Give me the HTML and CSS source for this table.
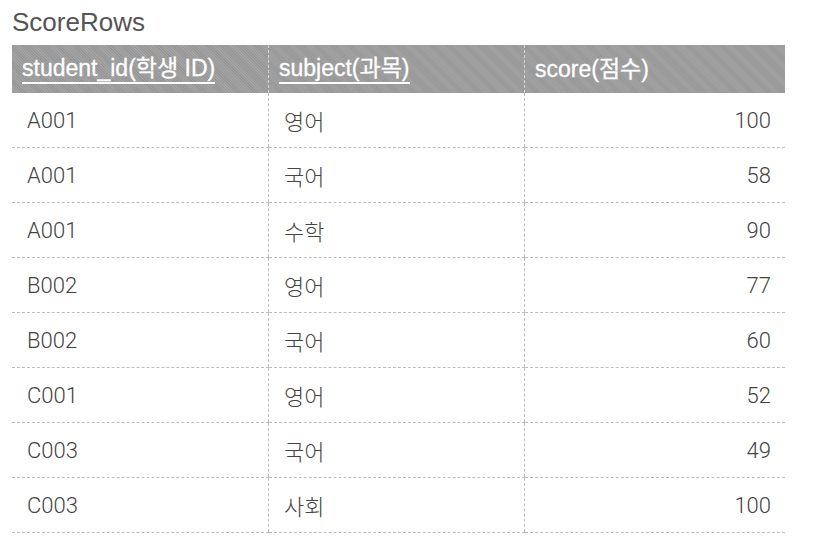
FILE: index.html
```html
<!DOCTYPE html>
<html lang="ko">
<head>
<meta charset="utf-8">
<link rel="stylesheet" href="styles.css">
</head>
<body>
<div class="page">
  <div class="title">ScoreRows</div>
  <table class="grid">
    <thead>
      <tr>
        <th class="c1"><span>student_id(학생 ID)</span></th>
        <th class="c2"><span>subject(과목)</span></th>
        <th class="c3"><span class="plain">score(점수)</span></th>
      </tr>
    </thead>
    <tbody>
      <tr><td>A001</td><td>영어</td><td class="num">100</td></tr>
      <tr><td>A001</td><td>국어</td><td class="num">58</td></tr>
      <tr><td>A001</td><td>수학</td><td class="num">90</td></tr>
      <tr><td>B002</td><td>영어</td><td class="num">77</td></tr>
      <tr><td>B002</td><td>국어</td><td class="num">60</td></tr>
      <tr><td>C001</td><td>영어</td><td class="num">52</td></tr>
      <tr><td>C003</td><td>국어</td><td class="num">49</td></tr>
      <tr><td>C003</td><td>사회</td><td class="num">100</td></tr>
    </tbody>
  </table>
</div>
</body>
</html>
```
FILE: styles.css
```css
html, body {
  margin: 0;
  padding: 0;
  background: #ffffff;
}
body {
  font-family: "Liberation Sans", "Noto Sans CJK KR", sans-serif;
  color: #4d4d4d;
}
.page {
  padding: 7px 0 0 12px;
  width: 773px;
}
.title {
  font-size: 26px;
  line-height: 30px;
  color: #555555;
  height: 38px;
}
.grid {
  width: 773px;
  border-collapse: collapse;
  table-layout: fixed;
}
.grid th {
  background: #9d9d9d;
  background-image: repeating-linear-gradient(45deg, rgba(255,255,255,0.06) 0 1px, rgba(0,0,0,0.04) 1px 2px);
  color: #ffffff;
  font-weight: normal;
  font-size: 23px;
  text-align: left;
  height: 48px;
  padding: 0 0 0 10px;
  vertical-align: middle;
  border-left: 1px dashed #d4d4d4;
  -webkit-text-stroke: 0.3px #ffffff;
}
.grid th:first-child { border-left: none; }
.grid th span {
  display: inline-block;
  border-bottom: 2px solid #ffffff;
  line-height: 27px;
  padding-bottom: 0;
  margin-top: 1px;
}
.grid th span.plain { border-bottom: none; margin-top: -1px; }
.grid .c1 { width: 246px; }
.grid .c2 { width: 245px; }
.grid td {
  height: 54px;
  border-bottom: 1px dashed #bdbdbd;
  border-left: 1px dashed #bdbdbd;
  font-family: Roboto, "Noto Sans CJK KR", sans-serif;
  font-size: 22px;
  font-weight: 300;
  color: #444444;
  padding: 0 0 0 15px;
  vertical-align: middle;
}
.grid td:first-child { border-left: none; }
.grid td.num {
  text-align: right;
  padding: 0 14px 0 0;
}
```
